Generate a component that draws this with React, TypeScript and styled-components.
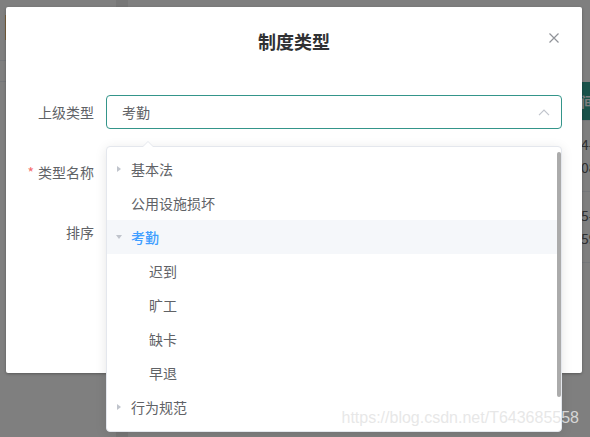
import React from 'react';
import styled, { createGlobalStyle } from 'styled-components';

const GlobalStyle = createGlobalStyle`
  html, body {
    margin: 0;
    padding: 0;
    width: 590px;
    height: 437px;
    overflow: hidden;
    font-family: "Noto Sans CJK SC", "Noto Sans", sans-serif;
  }
  * { box-sizing: border-box; }
`;

type TreeNode = {
  label: string;
  children?: string[];
  expanded?: boolean;
  current?: boolean;
};

const tree: TreeNode[] = [
  { label: '基本法', children: ['总则'] },
  { label: '公用设施损坏' },
  { label: '考勤', expanded: true, current: true, children: ['迟到', '旷工', '缺卡', '早退'] },
  { label: '行为规范', children: ['着装'] },
  { label: '奖惩制度' },
];

const rows = [
  { date: '4-16', time: '08:59' },
  { date: '5-10', time: '59:00' },
];

/* ---------- page behind the mask ---------- */

const Page = styled.div`
  position: relative;
  width: 590px;
  height: 437px;
  overflow: hidden;
  display: flex;
  background: #fff;
`;

const Side = styled.div`
  width: 116px;
  display: flex;
  flex-direction: column;
`;

const SideHeader = styled.div`
  height: 61px;
  padding: 15px 0;
  border-bottom: 1px solid #ebeef5;
`;

const SideTag = styled.div`
  width: 6px;
  height: 25px;
  border-right: 1px solid #f3c37c;
`;

const SideRow = styled.div`
  height: 21px;
  border-bottom: 1px solid #ebeef5;
`;

const Splitter = styled.div`
  width: 12px;
  background: #eeeeee;
`;

const Main = styled.div`
  flex: 1;
  display: flex;
  flex-direction: column;
  overflow: hidden;
`;

const Toolbar = styled.div`
  height: 82px;
`;

const TableRow = styled.div<{ $head?: boolean }>`
  display: grid;
  grid-template-columns: 453px 60px;
  height: ${(p) => (p.$head ? '39px' : '71px')};
  background: ${(p) => (p.$head ? '#32a494' : '#fff')};
  color: ${(p) => (p.$head ? '#fff' : '#606266')};
  border-bottom: 1px solid #ebeef5;
  font-size: 14px;
  white-space: nowrap;
`;

const Cell = styled.div<{ $head?: boolean }>`
  display: flex;
  flex-direction: column;
  justify-content: center;
  line-height: 23px;
  font-weight: ${(p) => (p.$head ? 'bold' : 'normal')};
`;

const Mask = styled.div`
  position: absolute;
  inset: 0;
  background: rgba(0, 0, 0, 0.5);
  padding: 7px 0 0 6px;
`;

/* ---------- dialog ---------- */

const Dialog = styled.div`
  position: relative;
  width: 576px;
  background: #fff;
  border-radius: 2px;
  box-shadow: 0 1px 3px rgba(0, 0, 0, 0.3);
`;

const Header = styled.div`
  padding: 22px 20px 8px;
`;

const Title = styled.div`
  text-align: center;
  font-size: 18px;
  line-height: 24px;
  font-weight: bold;
  color: #303133;
`;

const Close = styled.button`
  position: absolute;
  top: 26px;
  right: 23px;
  width: 10px;
  height: 10px;
  padding: 0;
  border: 0;
  background: transparent;
  display: flex;
`;

const Body = styled.div`
  padding: 34px 20px 30px;
`;

const FormItem = styled.div`
  display: flex;
  margin-bottom: 26px;
`;

const Label = styled.label`
  width: 80px;
  padding-right: 12px;
  text-align: right;
  font-size: 14px;
  line-height: 34px;
  color: #606266;
`;

const Star = styled.span`
  color: #f56c6c;
  margin-right: 4px;
`;

const Field = styled.div`
  position: relative;
  flex: 1;
`;

const Input = styled.div<{ $focus?: boolean }>`
  height: 34px;
  border: 1px solid ${(p) => (p.$focus ? '#34958a' : '#dcdfe6')};
  border-radius: 4px;
  padding: 0 11px 0 15px;
  display: flex;
  align-items: center;
  justify-content: space-between;
  font-size: 14px;
  color: #606266;
`;

const Footer = styled.div`
  padding: 10px 20px 22px;
  display: flex;
  justify-content: flex-end;
  gap: 10px;
`;

const Button = styled.button<{ $primary?: boolean }>`
  height: 36px;
  padding: 0 20px;
  border-radius: 4px;
  font-size: 14px;
  font-family: inherit;
  border: 1px solid ${(p) => (p.$primary ? '#34958a' : '#dcdfe6')};
  background: ${(p) => (p.$primary ? '#34958a' : '#fff')};
  color: ${(p) => (p.$primary ? '#fff' : '#606266')};
`;

/* ---------- tree dropdown ---------- */

const Popover = styled.div`
  position: absolute;
  top: calc(100% + 17px);
  left: 0;
  right: 0;
  height: 286px;
  background: #fff;
  border: 1px solid #e4e7ed;
  border-radius: 4px;
  box-shadow: 0 2px 12px rgba(0, 0, 0, 0.1);
  z-index: 10;

  &::before,
  &::after {
    content: '';
    position: absolute;
    left: 35px;
    border: 6px solid transparent;
    border-top-width: 0;
  }
  &::before {
    top: -6px;
    border-bottom-color: #e4e7ed;
  }
  &::after {
    top: -5px;
    border-bottom-color: #fff;
  }
`;

const ScrollView = styled.div`
  height: 100%;
  overflow: hidden;
  padding: 5px 0;
`;

const Thumb = styled.div`
  position: absolute;
  top: 5px;
  right: 0;
  width: 4px;
  height: 245px;
  border-radius: 2px;
  background: #ababab;
`;

const Node = styled.div<{ $level: number; $current?: boolean }>`
  height: 34px;
  display: flex;
  align-items: center;
  padding-left: ${(p) => (p.$level - 1) * 18}px;
  background: ${(p) => (p.$current ? '#f5f7fa' : 'transparent')};
  color: ${(p) => (p.$current ? '#409eff' : '#606266')};
  font-size: 14px;
  font-weight: ${(p) => (p.$current ? 500 : 'normal')};
`;

const CaretBox = styled.span`
  width: 24px;
  height: 34px;
  display: flex;
  align-items: center;
  justify-content: center;
`;

const Caret = styled.span<{ $dir: 'right' | 'down' | 'none' }>`
  width: 0;
  height: 0;
  border-style: solid;
  border-color: transparent;
  ${(p) =>
    p.$dir === 'right'
      ? 'border-width: 3.5px 0 3.5px 4.5px; border-left-color: #c0c4cc;'
      : p.$dir === 'down'
        ? 'border-width: 4.5px 3.5px 0 3.5px; border-top-color: #c0c4cc;'
        : 'border-width: 0;'}
`;

const Watermark = styled.div`
  position: absolute;
  right: 11px;
  bottom: 10px;
  font-family: "Liberation Sans", Arial, sans-serif;
  font-size: 16px;
  line-height: 18px;
  color: rgba(228, 228, 228, 0.88);
  pointer-events: none;
  z-index: 20;
`;

const ChevronUp = () => (
  <svg width="12" height="7" viewBox="0 0 12 7">
    <path d="M1 6.2 L6 1.2 L11 6.2" fill="none" stroke="#c0c4cc" strokeWidth="1.2" />
  </svg>
);

const CloseIcon = () => (
  <svg width="10" height="10" viewBox="0 0 10 10">
    <path d="M0.5 0.5 L9.5 9.5 M9.5 0.5 L0.5 9.5" stroke="#909399" strokeWidth="1.2" />
  </svg>
);

type FlatRow = { key: string; label: string; level: number; dir: 'right' | 'down' | 'none'; current?: boolean };

const flatten = (nodes: TreeNode[]): FlatRow[] =>
  nodes.flatMap((n) => {
    const dir = n.children ? (n.expanded ? 'down' : 'right') : 'none';
    const self: FlatRow = { key: n.label, label: n.label, level: 1, dir, current: n.current };
    const kids: FlatRow[] = n.expanded && n.children
      ? n.children.map((c) => ({ key: `${n.label}-${c}`, label: c, level: 2, dir: 'none' as const }))
      : [];
    return [self, ...kids];
  });

const TreeSelect = () => (
  <Popover>
    <ScrollView>
      {flatten(tree).map((r) => (
        <Node key={r.key} $level={r.level} $current={r.current}>
          <CaretBox>
            <Caret $dir={r.dir} />
          </CaretBox>
          {r.label}
        </Node>
      ))}
    </ScrollView>
    <Thumb />
  </Popover>
);

export default function App() {
  return (
    <>
      <GlobalStyle />
      <Page>
        <Side>
          <SideHeader>
            <SideTag />
          </SideHeader>
          <SideRow />
        </Side>
        <Splitter />
        <Main>
          <Toolbar />
          <TableRow $head>
            <Cell $head />
            <Cell $head>间</Cell>
          </TableRow>
          {rows.map((r) => (
            <TableRow key={r.date}>
              <Cell />
              <Cell>
                <span>{r.date}</span>
                <span>{r.time}</span>
              </Cell>
            </TableRow>
          ))}
        </Main>

        <Mask>
          <Dialog>
            <Header>
              <Title>制度类型</Title>
            </Header>
            <Close aria-label="关闭">
              <CloseIcon />
            </Close>
            <Body>
              <FormItem>
                <Label>上级类型</Label>
                <Field>
                  <Input $focus>
                    考勤
                    <ChevronUp />
                  </Input>
                  <TreeSelect />
                </Field>
              </FormItem>
              <FormItem>
                <Label>
                  <Star>*</Star>类型名称
                </Label>
                <Field>
                  <Input />
                </Field>
              </FormItem>
              <FormItem>
                <Label>排序</Label>
                <Field>
                  <Input />
                </Field>
              </FormItem>
            </Body>
            <Footer>
              <Button>取 消</Button>
              <Button $primary>确 定</Button>
            </Footer>
          </Dialog>
        </Mask>

        <Watermark>https://blog.csdn.net/T643685558</Watermark>
      </Page>
    </>
  );
}
